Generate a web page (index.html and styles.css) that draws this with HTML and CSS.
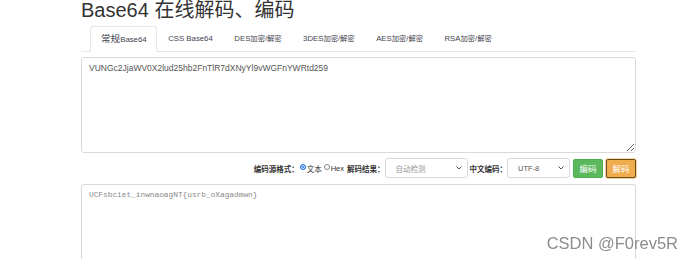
FILE: index.html
```html
<!DOCTYPE html>
<html lang="zh-CN">
<head>
    <meta charset="UTF-8">
    <meta name="viewport" content="width=device-width, initial-scale=1.0">
    <title>Base64 在线解码、编码</title>
    <link rel="stylesheet" href="styles.css">
</head>
<body>

<div class="page">
    <h1 class="title">Base64 在线解码、编码</h1>

    <!-- Zakładki -->
    <ul class="tabs">
        <li class="tab active"><span class="cjk-wide">常规</span>Base64</li>
        <li class="tab">CSS Base64</li>
        <li class="tab">DES<span class="cjk">加密/解密</span></li>
        <li class="tab">3DES<span class="cjk">加密/解密</span></li>
        <li class="tab">AES<span class="cjk">加密/解密</span></li>
        <li class="tab">RSA<span class="cjk">加密/解密</span></li>
    </ul>

    <textarea class="box box-input">VUNGc2JjaWV0X2lud25hb2FnTlR7dXNyYl9vWGFnYWRtd259</textarea>

    <!-- Opcje -->
    <div class="controls">
        <span class="label">编码源格式：</span>
        <span class="radio checked"></span><span class="opt">文本</span>
        <span class="radio"></span><span class="opt">Hex</span>
        <span class="label">解码结果：</span>
        <div class="select select-wide">
            <span>自动检测</span>
            <svg width="6" height="4" viewBox="0 0 6 4"><path d="M0.5 0.5 L3 3 L5.5 0.5" fill="none" stroke="#555" stroke-width="1"/></svg>
        </div>
        <span class="label">中文编码：</span>
        <div class="select select-narrow">
            <span>UTF-8</span>
            <svg width="6" height="4" viewBox="0 0 6 4"><path d="M0.5 0.5 L3 3 L5.5 0.5" fill="none" stroke="#555" stroke-width="1"/></svg>
        </div>
        <button class="btn btn-green">编码</button>
        <button class="btn btn-orange">解码</button>
    </div>

    <textarea class="box box-output">UCFsbciet_inwnaoagNT{usrb_oXagadmwn}</textarea>
</div>

<div class="watermark">CSDN @F0rev5R</div>

</body>
</html>
```

FILE: styles.css
```css
* {
    margin: 0;
    padding: 0;
    box-sizing: border-box;
}

body {
    font-family: 'Liberation Sans', 'Noto Sans CJK SC', sans-serif;
    background: #fff;
    color: #333;
    overflow: hidden;
}

.page {
    margin-left: 81px;
    width: 555px;
}

.title {
    font-size: 20px;
    font-weight: normal;
    line-height: 22px;
    color: #333;
    margin-top: -1px;
}

/* Zakładki */
.tabs {
    list-style: none;
    display: flex;
    margin-top: 5px;
    padding-left: 9px;
    border-bottom: 1px solid #e6e6e6;
    height: 26px;
}

.tab {
    padding: 0 9.5px 0 10px;
    line-height: 24px;
    font-size: 7.8px;
    color: #3f3f50;
    border: 1px solid transparent;
    border-radius: 3px 3px 0 0;
    margin-bottom: -1px;
}

.tab .cjk {
    font-size: 7.3px;
}

.tab .cjk-wide {
    font-size: 9.6px;
}

.tab.active {
    border-color: #e6e6e6;
    border-bottom-color: #fff;
    background-color: #fff;
}

/* Pola tekstowe */
.box {
    display: block;
    width: 555px;
    border: 1px solid #d9d9d9;
    border-radius: 3px;
    padding: 5px 7px;
    outline: none;
}

.box-input {
    margin-top: 5px;
    height: 96px;
    font-family: 'Liberation Sans', sans-serif;
    font-size: 8.5px;
    color: #555;
}

.box-output {
    margin-top: 6px;
    height: 100px;
    font-family: 'Liberation Mono', monospace;
    font-size: 7.8px;
    color: #8a8a8a;
    padding-top: 6px;
}

/* Opcje */
.controls {
    display: flex;
    justify-content: flex-end;
    align-items: center;
    height: 20px;
    margin-top: 5px;
    font-size: 7.5px;
    color: #333;
}

.label {
    font-weight: bold;
    margin-left: 2px;
}

.radio {
    width: 6px;
    height: 6px;
    border-radius: 50%;
    border: 1px solid #888;
    margin: -3px 1px 0 1px;
}

.radio.checked {
    background-color: #1a73e8;
    border-color: #1a73e8;
    box-shadow: inset 0 0 0 1px #fff;
}

.opt {
    margin-right: 1px;
}

.select {
    display: flex;
    justify-content: space-between;
    align-items: center;
    height: 20px;
    border: 1px solid #d9d9d9;
    border-radius: 3px;
    padding: 0 5px 0 10px;
    color: #999;
}

.select-wide {
    width: 83px;
}

.select-narrow {
    width: 63px;
    color: #555;
}

.btn {
    height: 19px;
    width: 30px;
    border: 1px solid transparent;
    border-radius: 2px;
    font-family: 'Liberation Sans', 'Noto Sans CJK SC', sans-serif;
    font-size: 8.5px;
    color: #fff;
    margin-left: 3px;
}

.btn-green {
    background-color: #5cb85c;
    border-color: #4cae4c;
}

.btn-orange {
    background-color: #f0ad4e;
    border-color: #6b4a1e;
    box-shadow: 0 0 0 1px #f5d3a0;
}

.watermark {
    position: fixed;
    right: 14px;
    bottom: 6px;
    font-size: 16.5px;
    color: #8c8c8c;
}
```
